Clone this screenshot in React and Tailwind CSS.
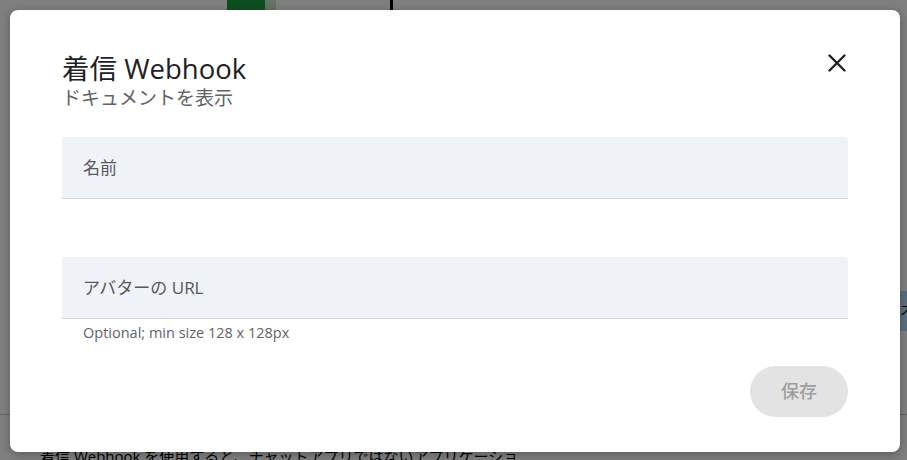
import { useState } from "react";

const font = { fontFamily: "'Open Sans', 'Noto Sans CJK JP', sans-serif" };

function Field({ label, helper }) {
  return (
    <div className="flex flex-col">
      <div className="h-[62px] rounded-t-[4px] bg-[#eff2f7] border-b border-[#cfd3da] flex items-center px-[21px]">
        <span className="text-[17px] text-[#55585e]">{label}</span>
      </div>
      {helper && (
        <p className="text-[14.5px] text-[#5f6368] pl-[21px] pt-[5px] leading-[18px]">{helper}</p>
      )}
    </div>
  );
}

export default function App() {
  const [open] = useState(true);

  return (
    <div className="relative w-[907px] h-[460px] overflow-hidden bg-white" style={font}>
      {/* Page behind the dialog */}
      <div className="flex flex-col h-full">
        <div className="flex items-start h-[12px]">
          <div className="ml-[227px] w-[38px] h-[10px] bg-[#1a9d40]" />
          <div className="w-[11px] h-[10px] bg-[#c8e6c9]" />
          <div className="ml-[114px] w-[3px] h-[12px] bg-black" />
        </div>
        <div className="flex-1 flex justify-end items-center">
          <div className="w-[7px] h-[40px] bg-[#b6daf9] mt-[196px] text-[12px] leading-[40px] overflow-hidden">ス</div>
        </div>
        <div className="border-t border-[#c4c4c4] h-[38px]" />
        <p className="pl-[40px] w-[520px] text-[15px] text-black leading-[20px] -mt-[6px] h-[14px]">
          着信 Webhook を使用すると、チャットアプリではないアプリケーションからメッセージを送信できます
        </p>
      </div>

      {open && (
        <div className="absolute inset-0 bg-black/50">
          <div className="absolute left-[10px] top-[10px] w-[890px] h-[442px] bg-white rounded-[8px] shadow-[0_2px_8px_rgba(0,0,0,0.3)] flex flex-col px-[52px] pt-[44px] pb-[35px]">
            <div className="flex justify-between items-start">
              <div className="flex flex-col">
                <h2 className="text-[27.5px] leading-[30px] text-[#202124]">着信 Webhook</h2>
                <p className="mt-[2px] text-[19px] leading-[24px] text-[#5f6368]">ドキュメントを表示</p>
              </div>
              <button className="mr-[2px] w-[18px] h-[18px] flex items-center justify-center">
                <svg width="18" height="18" viewBox="0 0 18 18">
                  <path d="M1.5 1.5 L16.5 16.5 M16.5 1.5 L1.5 16.5" stroke="#202124" strokeWidth="2.4" strokeLinecap="round" />
                </svg>
              </button>
            </div>

            <div className="flex flex-col gap-[58px] mt-[27px]">
              <Field label="名前" />
              <Field label="アバターの URL" helper="Optional; min size 128 x 128px" />
            </div>

            <div className="mt-auto flex justify-end">
              <button className="w-[98px] h-[51px] rounded-full bg-[#e3e3e3] text-[18px] text-[#9e9e9e] font-medium">
                保存
              </button>
            </div>
          </div>
        </div>
      )}
    </div>
  );
}
